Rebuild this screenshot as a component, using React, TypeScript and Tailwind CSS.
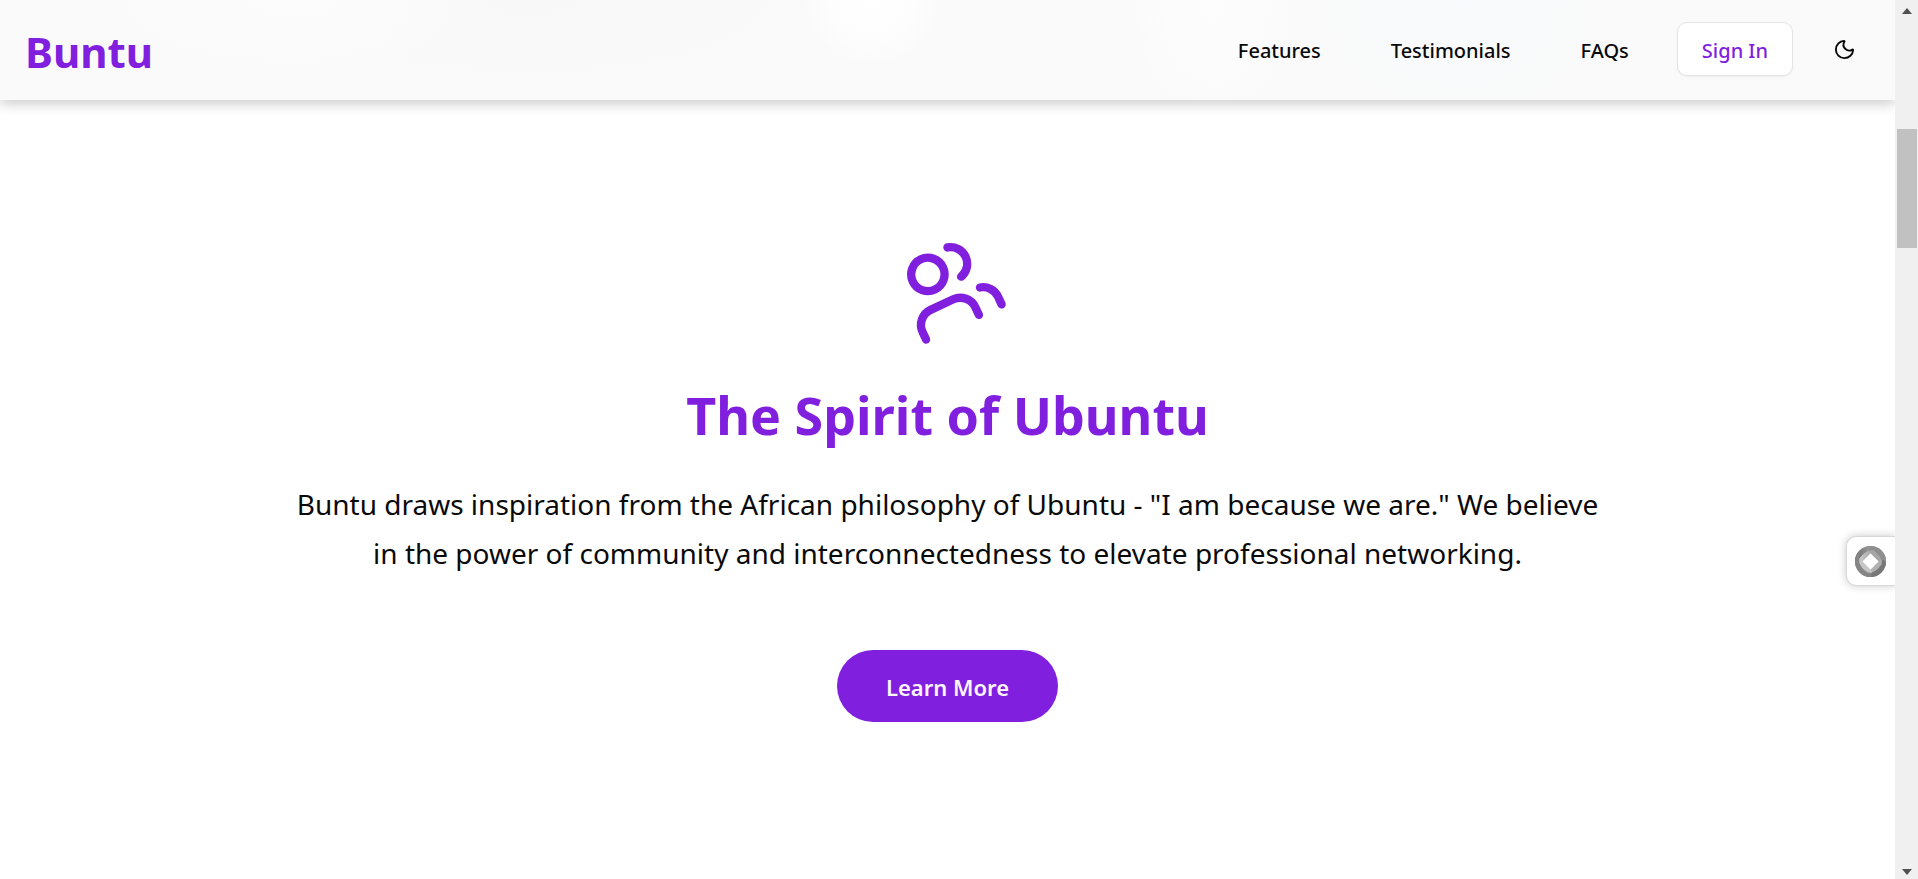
import { Moon, Users } from "lucide-react";

const links = ["Features", "Testimonials", "FAQs"];

function Header() {
  return (
    <header className="relative z-10 flex h-[100px] items-center justify-between bg-[#fafafa] bg-[radial-gradient(ellipse_70px_66px_at_46%_0%,#ffffff_0%,#fdfdfd_60%,transparent_100%),radial-gradient(ellipse_80px_120px_at_64%_0%,#fdfdfd_0%,#fcfcfc_60%,transparent_100%),radial-gradient(ellipse_140px_120px_at_77%_0%,#f8fafd_0%,transparent_100%),radial-gradient(ellipse_200px_70px_at_16%_0%,#fcfcfc_0%,transparent_100%),radial-gradient(ellipse_300px_90px_at_28%_0%,#f8f8f8_0%,transparent_100%)] pr-6 pl-[25px] shadow-[0_4px_12px_rgba(0,0,0,0.2)]">
      <a href="#home" className="pt-[3px] text-[42px] leading-[50px] font-bold text-[#811fdf]">
        Buntu
      </a>
      <div className="flex items-center">
        <nav className="mr-12 flex items-center gap-[70px] pt-[2px]">
          {links.map((label) => (
            <a key={label} href={`#${label.toLowerCase()}`} className="text-[20px] leading-[30px] font-medium text-[#0a0a0a]">
              {label}
            </a>
          ))}
        </nav>
        <button type="button" className="mb-[2px] h-[54px] rounded-[10px] border border-[#e4e4e6] bg-white px-6 pt-1 text-[20px] leading-[30px] font-medium text-[#811fdf] shadow-xs">
          Sign In
        </button>
        <button type="button" aria-label="Toggle theme" className="mb-[2px] ml-6 flex size-[54px] items-center justify-center text-[#0a0a0a]">
          <Moon size={23} strokeWidth={2} />
        </button>
      </div>
    </header>
  );
}

function SidebarTab() {
  return (
    <button
      type="button"
      aria-label="Open side panel"
      className="absolute top-[536px] right-0 flex h-[50px] w-[49px] items-center rounded-l-[10px] border border-r-0 border-[#d8d8d8] bg-white pl-2 shadow-[0_0_8px_rgba(0,0,0,0.22)]"
    >
      <svg viewBox="0 0 30 30" className="size-[31px]" aria-hidden="true">
        <defs>
          <linearGradient id="blade" x1="2" y1="18" x2="20" y2="2" gradientUnits="userSpaceOnUse">
            <stop offset="0" stopColor="#626262" />
            <stop offset="1" stopColor="#a2a2a2" />
          </linearGradient>
          <linearGradient id="fold" x1="5" y1="14" x2="23" y2="8" gradientUnits="userSpaceOnUse">
            <stop offset="0" stopColor="#c4c4c4" />
            <stop offset="1" stopColor="#a0a0a0" />
          </linearGradient>
        </defs>
        <circle cx="15" cy="15" r="15" fill="#8c8c8c" />
        <path d="M0 15A15 15 0 0 1 15 0Q21 0 25 5Q9 1 4 17Z" fill="url(#blade)" />
        <path d="M15 0A15 15 0 0 1 30 15Q30 21 25 25Q29 9 13 4Z" fill="#8e8e8e" />
        <path d="M30 15A15 15 0 0 1 15 30Q9 30 5 25Q21 29 26 13Z" fill="#777777" />
        <path d="M15 30A15 15 0 0 1 0 15Q0 9 5 5Q1 21 17 26Z" fill="#858585" />
        <path d="M4 17Q6 4 18 4L22 8 15 7 7 15Z" fill="url(#fold)" />
        <path d="M13 4Q26 6 26 18L22 22 23 15 15 7Z" fill="#a6a6a6" />
        <path d="M26 13Q24 26 12 26L8 22 15 23 23 15Z" fill="#b0b0b0" />
        <path d="M17 26Q4 24 4 12L8 8 7 15 15 23Z" fill="#c6c6c6" />
        <path d="M15 7L23 15 15 23 7 15Z" fill="#fff" />
      </svg>
    </button>
  );
}

function Scrollbar() {
  return (
    <div aria-hidden="true" className="flex w-[23px] shrink-0 flex-col items-center bg-[#f0f0f0] py-2">
      <svg viewBox="0 0 10 6" className="h-[6px] w-[10px]">
        <path d="M5 0L10 6H0Z" fill="#505050" />
      </svg>
      <div className="mt-[115px] h-[119px] w-5 bg-[#c1c1c1]" />
      <svg viewBox="0 0 10 6" className="mt-auto -mb-1 h-[6px] w-[10px]">
        <path d="M0 0H10L5 6Z" fill="#505050" />
      </svg>
    </div>
  );
}

export default function App() {
  return (
    <div className="flex min-h-screen bg-white font-['Noto_Sans','Open_Sans',sans-serif]">
      <div className="relative min-w-0 flex-1 overflow-hidden">
        <Header />
        <main className="flex flex-col items-center px-6 pt-[138px] text-center">
          <Users size={100} strokeWidth={2} className="-rotate-25 text-[#811fdf]" />
          <h1 className="mt-[42px] text-[52px] leading-[70px] font-bold text-[#811fdf]">The Spirit of Ubuntu</h1>
          <p className="mt-[30px] max-w-[1320px] text-[28px] leading-[49px] text-[#0a0a0a]">
            Buntu draws inspiration from the African philosophy of Ubuntu - "I am because we are." We believe in the power of community and interconnectedness to elevate professional networking.
          </p>
          <button type="button" className="mt-[72px] h-[72px] rounded-full bg-[#811fdf] px-[49px] pt-[2px] text-[22px] leading-[32px] font-semibold text-[#faf5ff]">
            Learn More
          </button>
        </main>
        <SidebarTab />
      </div>
      <Scrollbar />
    </div>
  );
}
